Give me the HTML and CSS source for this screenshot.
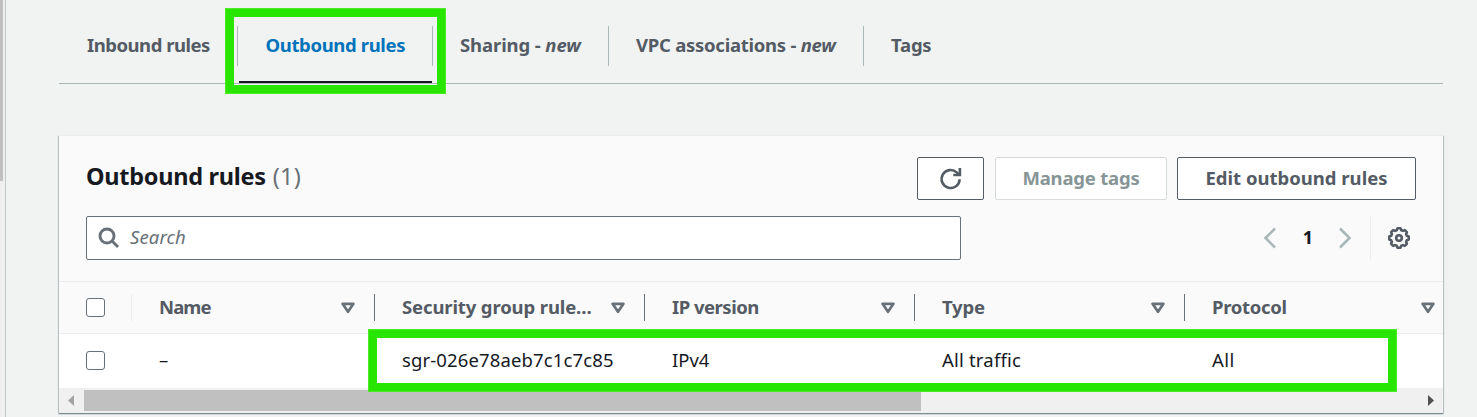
FILE: index.html
```html
<!DOCTYPE html>
<html lang="en">
<head>
<meta charset="utf-8">
<title>Outbound rules</title>
<link rel="stylesheet" href="styles.css">
</head>
<body>
<svg class="defs" aria-hidden="true"><symbol id="caret" viewBox="0 0 14 12"><path d="M1.6 1.8H12.4L7 9.8Z" fill="none" stroke="#687078" stroke-width="2.7" stroke-linejoin="round"/></symbol></svg>
<div class="page">
  <div class="page-scroll"><div class="page-thumb"></div></div>
  <main class="content">
    <nav class="tabs">
      <a class="tab tab-inbound"><span>Inbound rules</span></a>
      <a class="tab tab-outbound active"><span>Outbound rules</span></a>
      <a class="tab tab-sharing"><span>Sharing - <i>new</i></span></a>
      <a class="tab tab-vpc"><span>VPC associations - <i>new</i></span></a>
      <a class="tab tab-tags"><span>Tags</span></a>
    </nav>
    <section class="panel">
      <header class="panel-head">
        <div class="title-row">
          <h2><span class="title">Outbound rules</span><span class="count">(1)</span></h2>
          <div class="actions">
            <button class="btn refresh" aria-label="Refresh"><svg width="24" height="24" viewBox="0 0 24 24" fill="none" stroke="#545b64" stroke-width="2.6"><path d="M20.6 12.2A9 9 0 1 1 17.7 5.4L20 7.8"/><path d="M20.9 1V8H14.3"/></svg></button>
            <button class="btn manage"><span>Manage tags</span></button>
            <button class="btn edit"><span>Edit outbound rules</span></button>
          </div>
        </div>
        <div class="tools">
          <div class="search"><svg width="22" height="22" viewBox="0 0 22 22" fill="none" stroke="#687078" stroke-width="2.9"><circle cx="9" cy="9" r="7"/><path d="M14 14L20 20"/></svg><span>Search</span></div>
          <div class="pager">
            <svg width="14" height="22" viewBox="0 0 14 22" fill="none" stroke="#aab7b8" stroke-width="2.6"><path d="M12 1.5L2.5 11L12 20.5"/></svg>
            <b>1</b>
            <svg width="14" height="22" viewBox="0 0 14 22" fill="none" stroke="#aab7b8" stroke-width="2.6"><path d="M2 1.5L11.5 11L2 20.5"/></svg>
          </div>
          <div class="prefs"><svg width="24" height="24" viewBox="0 0 24 24" fill="none" stroke="#545b64" stroke-width="2.6"><path stroke-linejoin="round" d="M9.7 4.2L10.5 2.3H13.5L14.3 4.2L16 4.9L17.8 4.1L19.9 6.2L19.1 8L19.8 9.7L21.7 10.5V13.5L19.8 14.3L19.1 16L19.9 17.8L17.8 19.9L16 19.1L14.3 19.8L13.5 21.7H10.5L9.7 19.8L8 19.1L6.2 19.9L4.1 17.8L4.9 16L4.2 14.3L2.3 13.5V10.5L4.2 9.7L4.9 8L4.1 6.2L6.2 4.1L8 4.9Z"/><circle cx="12" cy="12" r="2.8"/></svg></div>
        </div>
      </header>
      <div class="row head">
        <div class="check"><i class="box"></i></div>
        <div class="th"><span class="t-name">Name</span><svg class="caret"><use href="#caret"/></svg></div>
        <div class="th"><span class="t-sgr">Security group rule…</span><svg class="caret"><use href="#caret"/></svg></div>
        <div class="th"><span class="t-ip">IP version</span><svg class="caret"><use href="#caret"/></svg></div>
        <div class="th"><span class="t-type">Type</span><svg class="caret"><use href="#caret"/></svg></div>
        <div class="th"><span class="t-proto">Protocol</span><svg class="caret"><use href="#caret"/></svg></div>
      </div>
      <div class="row data">
        <div class="check"><i class="box"></i></div>
        <div class="td">–</div>
        <div class="td"><span class="d-sgr">sgr-026e78aeb7c1c7c85</span></div>
        <div class="td"><span class="d-ip">IPv4</span></div>
        <div class="td"><span class="d-type">All traffic</span></div>
        <div class="td"><span class="d-all">All</span></div>
      </div>
      <div class="hscroll">
        <svg width="25" height="25" viewBox="0 0 25 25"><path d="M15 7V18L9 12.5Z" fill="#a3a3a3"/></svg>
        <div class="track"><div class="thumb"></div></div>
        <svg width="25" height="25" viewBox="0 0 25 25"><path d="M10 7V18L16 12.5Z" fill="#505050"/></svg>
      </div>
    </section>
  </main>
  <div class="mark mark-tab"></div>
  <div class="mark mark-row"></div>
</div>
</body>
</html>
```
FILE: styles.css
```css
* { box-sizing: border-box; }
body { margin: 0; background: #f1f3f3; font: 18.5px/26px "Noto Sans", "Open Sans", sans-serif; color: #16191f; overflow: hidden; }
.defs { display: none; }
.page { position: relative; display: flex; width: 1477px; height: 417px; overflow: hidden; }
.page-scroll { width: 6px; background: #f0f0f0; border-right: 1px solid #c3caca; flex: none; }
.page-thumb { width: 3px; height: 181px; background: #c0c0c0; }
.content { width: 1384px; margin-left: 53px; }
.tabs { display: flex; height: 84px; padding-top: 26px; border-bottom: 1px solid #aab7b8; color: #545b64; font-weight: 700; }
.tab { height: 40px; padding: 6px 0 0 27.5px; border-right: 1px solid #aab7b8; white-space: nowrap; }
.tab-inbound { width: 179px; padding-left: 28px; letter-spacing: -.48px; }
.tab-outbound { width: 195px; letter-spacing: -.36px; }
.tab-sharing { width: 176px; padding-left: 27px; letter-spacing: -.1px; }
.tab-vpc { width: 255px; padding-left: 27px; letter-spacing: -.26px; }
.tab-tags { border: 0; padding-left: 27px; letter-spacing: -.2px; }
.active { color: #0073bb; }
.active::after { content: ""; display: block; width: 193px; height: 2px; margin: 23px 0 0 -26.5px; background: #16191f; }
.panel { width: 1384px; height: 278px; margin-top: 51px; background: #fff; overflow: hidden; border-top: 1px solid #eaeded; box-shadow: 0 1px 1px #7b8a90, 1px 1px 1px #c5cccc, -1px 1px 1px #c5cccc; }
.panel-head { height: 145px; background: #fafafa; padding: 21px 27px 0; }
.title-row { display: flex; justify-content: space-between; height: 59px; }
h2 { display: flex; gap: 7px; margin: 3px 0 0; font-size: 23.5px; line-height: 32px; }
.title { letter-spacing: -.28px; }
.count { color: #687078; font-weight: 400; letter-spacing: .2px; }
.actions { display: flex; gap: 11px; }
.btn { display: flex; align-items: center; justify-content: center; height: 43px; padding: 0 0 2px; border: 1px solid #545b64; border-radius: 2px; background: #fff; color: #545b64; font: 700 18.5px/26px "Noto Sans", sans-serif; white-space: nowrap; }
.refresh { width: 67px; padding: 1px 0 0; }
.manage { width: 172px; color: #879596; border-color: #d5dbdb; letter-spacing: -.2px; }
.edit { width: 239px; margin-left: -1px; }
.tools { display: flex; }
.search { display: flex; align-items: center; gap: 10px; width: 875px; height: 44px; padding: 0 0 2px 11px; border: 1px solid #687078; border-radius: 2px; background: #fff; color: #687078; font-style: italic; letter-spacing: .1px; }
.search svg { margin-top: 2px; }
.pager { display: flex; align-items: center; justify-content: space-between; width: 89px; margin-left: 302px; }
.pager b { font-size: 18px; margin: -2px 0 0 1px; }
.prefs { display: flex; align-items: center; margin-left: 18px; padding-left: 16px; border-left: 1px solid #eaeded; }
.row { display: grid; grid-template-columns: 73px 243px 270px 270px 270px 270px; }
.head { height: 53px; border: solid #eaeded; border-width: 1px 0; padding: 12px 0; background: #fafafa; color: #545b64; font-weight: 700; }
.check { display: flex; align-items: center; padding: 0 0 1px 27px; }
.head .check { border-right: 1px solid #eaeded; }
.box { width: 19px; height: 19px; border: 1.5px solid #687078; border-radius: 3px; background: #fff; }
.th { display: flex; align-items: center; justify-content: space-between; padding: 0 19px 0 27px; border-right: 1px solid #687078; white-space: nowrap; }
.th span { margin-top: -1px; }
.t-name { letter-spacing: -.9px; }
.t-sgr { letter-spacing: -.13px; }
.t-ip { letter-spacing: -.5px; }
.t-type { letter-spacing: -.2px; }
.t-proto { letter-spacing: -.3px; }
.d-sgr { letter-spacing: .13px; }
.d-type { letter-spacing: .2px; }
.d-all { letter-spacing: .4px; }
.caret { width: 14px; height: 12px; }
.data { height: 54px; }
.td { padding: 13px 0 0 27px; white-space: nowrap; }
.hscroll { display: flex; height: 26px; background: #f0f0f0; }
.track { flex: 1; padding-top: 2px; }
.thumb { width: 837px; height: 21px; background: #c0c0c0; }
.mark { position: absolute; border: 8px solid #28e600; box-shadow: 0 0 0 1px #4dea2a; }
.mark-tab { left: 226px; top: 9px; width: 219px; height: 84px; }
.mark-row { left: 369px; top: 330px; width: 1027px; height: 61px; }
```
